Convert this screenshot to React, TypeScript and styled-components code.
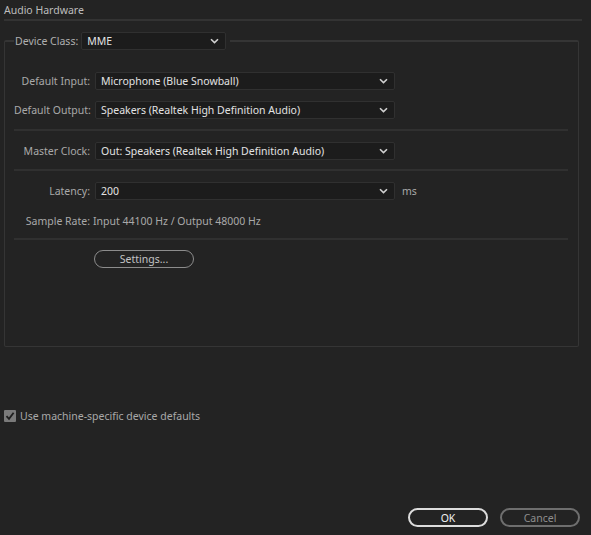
import React from "react";
import styled, { createGlobalStyle } from "styled-components";

const GlobalStyle = createGlobalStyle`
  html, body {
    margin: 0;
    padding: 0;
    background: #232323;
  }
  body {
    font-family: "Noto Sans", "Open Sans", sans-serif;
    font-size: 10.5px;
    color: #a9a9a9;
  }
`;

const Chevron: React.FC = () => (
  <svg width="9" height="6" viewBox="0 0 9 6">
    <path d="M1 1.2 L4.5 4.6 L8 1.2" fill="none" stroke="#d0d0d0" strokeWidth="1.6" />
  </svg>
);

interface SelectProps {
  value: string;
  width: number;
}

const Select: React.FC<SelectProps> = ({ value, width }) => (
  <SelectBox $width={width}>
    <span>{value}</span>
    <Chevron />
  </SelectBox>
);

const App: React.FC = () => {
  return (
    <Window>
      <GlobalStyle />
      <Title>Audio Hardware</Title>
      <TitleRule />
      <Group>
        <Legend>
          <LegendLabel>Device Class:</LegendLabel>
          <Select value="MME" width={145} />
        </Legend>
        <Rows $top={22} $bottom={10}>
          <Row>
            <Label>Default Input:</Label>
            <Select value="Microphone (Blue Snowball)" width={300} />
          </Row>
          <Row>
            <Label>Default Output:</Label>
            <Select value="Speakers (Realtek High Definition Audio)" width={300} />
          </Row>
        </Rows>
        <Separator />
        <Rows $top={11} $bottom={9}>
          <Row>
            <Label>Master Clock:</Label>
            <Select value="Out: Speakers (Realtek High Definition Audio)" width={300} />
          </Row>
        </Rows>
        <Separator />
        <Rows $top={11} $bottom={10}>
          <Row>
            <Label>Latency:</Label>
            <Select value="200" width={300} />
            <Unit>ms</Unit>
          </Row>
          <InfoRow>
            <Label>Sample Rate:</Label>
            <InfoText>Input 44100 Hz / Output 48000 Hz</InfoText>
          </InfoRow>
        </Rows>
        <Separator />
        <ButtonRow>
          <PillButton $width={100}>Settings...</PillButton>
        </ButtonRow>
      </Group>
      <CheckRow>
        <CheckBox>
          <svg width="10" height="10" viewBox="0 0 10 10">
            <path d="M1.5 5.2 L4 7.8 L8.6 1.8" fill="none" stroke="#1e1e1e" strokeWidth="1.8" />
          </svg>
        </CheckBox>
        <CheckLabel>Use machine-specific device defaults</CheckLabel>
      </CheckRow>
      <Footer>
        <DialogButton $primary>OK</DialogButton>
        <DialogButton>Cancel</DialogButton>
      </Footer>
    </Window>
  );
};

const Window = styled.div`
  width: 591px;
  height: 535px;
  box-sizing: border-box;
  display: flex;
  flex-direction: column;
  padding: 3px 11px 8px 4px;
  background: #232323;
`;

const Title = styled.div`
  color: #bdbdbd;
  line-height: 14px;
`;

const TitleRule = styled.div`
  height: 0;
  border-top: 2px solid #333333;
  margin-top: 2px;
  margin-right: -2px;
`;

const Group = styled.fieldset`
  margin: 11px 1px 0 0;
  padding: 0 10px 0 9px;
  height: 315px;
  box-sizing: border-box;
  border: 1px solid #353535;
  border-top-width: 2px;
  border-radius: 2px;
  min-width: 0;
`;

const Legend = styled.legend`
  display: flex;
  align-items: center;
  gap: 3px;
  padding: 0 4px 0 1px;
  margin-left: 0;
`;

const LegendLabel = styled.span`
  color: #b0b0b0;
`;

const Rows = styled.div<{ $top: number; $bottom: number }>`
  display: flex;
  flex-direction: column;
  gap: 11px;
  padding: ${(p) => p.$top}px 0 ${(p) => p.$bottom}px;
`;

const Row = styled.div`
  display: flex;
  align-items: center;
  gap: 5px;
`;

const InfoRow = styled(Row)`
  height: 14px;
  margin-top: 3px;
`;

const Label = styled.div`
  width: 76px;
  text-align: right;
  color: #a9a9a9;
  white-space: nowrap;
  flex-shrink: 0;
`;

const SelectBox = styled.div<{ $width: number }>`
  width: ${(p) => p.$width}px;
  height: 18px;
  box-sizing: border-box;
  display: flex;
  align-items: center;
  justify-content: space-between;
  padding: 0 6px 0 5px;
  background: #1c1c1c;
  border: 1px solid #303030;
  border-radius: 2px;
  color: #e2e2e2;
  span {
    white-space: nowrap;
  }
`;

const Unit = styled.span`
  margin-left: 2px;
  color: #a9a9a9;
`;

const InfoText = styled.span`
  color: #a9a9a9;
  margin-left: -2px;
`;

const Separator = styled.div`
  height: 0;
  border-top: 2px solid #303030;
`;

const ButtonRow = styled.div`
  display: flex;
  padding: 10px 0 0 80px;
`;

const PillButton = styled.button<{ $width: number }>`
  width: ${(p) => p.$width}px;
  height: 18px;
  box-sizing: border-box;
  border: 1.5px solid #8c8c8c;
  border-radius: 9px;
  background: transparent;
  color: #c4c4c4;
  font-family: inherit;
  font-size: 10.5px;
  padding: 0;
  line-height: 14px;
`;

const CheckRow = styled.div`
  display: flex;
  align-items: center;
  gap: 4px;
  margin-top: 62px;
`;

const CheckBox = styled.div`
  width: 12px;
  height: 12px;
  border-radius: 1px;
  background: #7a7a7a;
  display: flex;
  align-items: center;
  justify-content: center;
`;

const CheckLabel = styled.span`
  color: #a9a9a9;
`;

const Footer = styled.div`
  margin-top: auto;
  display: flex;
  justify-content: flex-end;
  gap: 12px;
`;

const DialogButton = styled.button<{ $primary?: boolean }>`
  width: 80px;
  height: 19px;
  box-sizing: border-box;
  border-radius: 10px;
  border: 2px solid ${(p) => (p.$primary ? "#dcdcdc" : "#6e6e6e")};
  background: transparent;
  color: ${(p) => (p.$primary ? "#f0f0f0" : "#8e8e8e")};
  font-family: inherit;
  font-size: 10.5px;
  padding: 0;
  line-height: 14px;
`;

export default App;
